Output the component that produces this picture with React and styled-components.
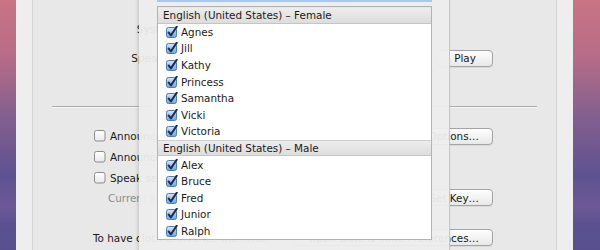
import styled, { createGlobalStyle } from "styled-components";

const GlobalStyle = createGlobalStyle`
  html, body { margin: 0; padding: 0; }
  body {
    font-family: "DejaVu Sans", "Liberation Sans", sans-serif;
    font-size: 10.4px;
    color: #1a1a1a;
    background: #5a5090;
  }
`;

const Desktop = styled.div`
  width: 600px;
  height: 250px;
  overflow: hidden;
  display: flex;
  padding-left: 16px;
  box-sizing: border-box;
  background: linear-gradient(
    to bottom,
    #c87483 0%,
    #b86c88 22%,
    #86608f 45%,
    #5f5290 70%,
    #6d5896 83%,
    #5b5190 90%,
    #574f8e 100%
  );
`;

const Window = styled.div`
  width: 557px;
  flex-shrink: 0;
  display: flex;
  padding: 0 16px;
  box-sizing: border-box;
  background: #eeeeee;
`;

const Pane = styled.div`
  flex: 1;
  position: relative;
  display: flex;
  flex-direction: column;
  padding-top: 19px;
  background: #e8e8e8;
  border-left: 1px solid #d4d4d4;
  border-right: 1px solid #d4d4d4;
`;

const TopRow = styled.div`
  display: grid;
  grid-template-columns: 177px 1fr auto;
  align-items: center;
  height: 20px;
  padding-right: 63px;
  margin-top: ${(p) => p.$gap || 0}px;
`;

const FieldLabel = styled.span`
  text-align: right;
  white-space: nowrap;
`;

const Button = styled.button`
  height: 17px;
  min-width: 56px;
  padding: 0 13px;
  font: inherit;
  color: #1a1a1a;
  white-space: nowrap;
  border: 1px solid #a4a4a4;
  border-radius: 4px;
  background: linear-gradient(to bottom, #ffffff, #f3f3f3 50%, #e8e8e8);
  box-shadow: 0 1px 0 rgba(0, 0, 0, 0.06);
`;

const Separator = styled.div`
  margin: 38px 19px 0;
  height: 1px;
  background: #acacac;
  border-bottom: 1px solid #f7f7f7;
`;

const OptionRow = styled.div`
  display: flex;
  align-items: center;
  justify-content: space-between;
  height: ${(p) => p.$height || 21}px;
  margin-top: ${(p) => p.$gap || 0}px;
  padding: 0 63px 0 ${(p) => p.$indent || 61}px;
  white-space: nowrap;
`;

const CheckLabel = styled.label`
  display: flex;
  align-items: center;
  gap: 4px;
`;

const Hint = styled.span`
  color: #8d8d8d;
`;

const Sheet = styled.div`
  position: absolute;
  top: -12px;
  bottom: -12px;
  left: 106px;
  width: 310px;
  box-sizing: border-box;
  padding: 12px 17px 0 18px;
  display: flex;
  flex-direction: column;
  background: rgba(237, 237, 237, 0.95);
  box-shadow: -1px 0 4px rgba(0, 0, 0, 0.16), 1px 0 0 #cdcdcd;
`;

const FocusBar = styled.div`
  height: 2px;
  background: #a9c9ec;
`;

const VoiceList = styled.div`
  margin-top: 4px;
  background: #ffffff;
  border: 1px solid #b3b3b3;
`;

const GroupHeader = styled.div`
  height: 16.6px;
  box-sizing: border-box;
  display: flex;
  align-items: center;
  padding-left: 5px;
  background: linear-gradient(to bottom, #ededed, #dddddd);
  border-top: 1px solid ${(p) => (p.$first ? "#e6e6e6" : "#cfcfcf")};
  border-bottom: 1px solid #c5c5c5;
  white-space: nowrap;
`;

const VoiceRow = styled.label`
  height: 16.6px;
  display: flex;
  align-items: center;
  gap: 3px;
  padding-left: 8px;
`;

const CheckedBox = () => (
  <svg width="12" height="12" viewBox="0 0 12 12">
    <defs>
      <linearGradient id="cb" x1="0" y1="0" x2="0" y2="1">
        <stop offset="0" stopColor="#dbe9f8" />
        <stop offset="0.5" stopColor="#9cc3ee" />
        <stop offset="1" stopColor="#6da5e2" />
      </linearGradient>
    </defs>
    <rect x="0.5" y="1.5" width="10" height="10" rx="2" fill="url(#cb)" stroke="#4f7cb5" />
    <path d="M2.6 6.4 L4.9 9.4 L10.8 0.6" fill="none" stroke="#1d2c4e" strokeWidth="1.9" strokeLinecap="round" strokeLinejoin="round" />
  </svg>
);

const EmptyBox = () => (
  <svg width="12" height="12" viewBox="0 0 12 12">
    <defs>
      <linearGradient id="eb" x1="0" y1="0" x2="0" y2="1">
        <stop offset="0" stopColor="#ffffff" />
        <stop offset="1" stopColor="#e9e9e9" />
      </linearGradient>
    </defs>
    <rect x="0.5" y="0.5" width="10.5" height="10.5" rx="2" fill="url(#eb)" stroke="#8c8c8c" />
  </svg>
);

const groups = [
  {
    title: "English (United States) – Female",
    voices: ["Agnes", "Jill", "Kathy", "Princess", "Samantha", "Vicki", "Victoria"],
  },
  {
    title: "English (United States) – Male",
    voices: ["Alex", "Bruce", "Fred", "Junior", "Ralph"],
  },
];

export default function App() {
  return (
    <>
      <GlobalStyle />
      <Desktop>
        <Window>
          <Pane>
            <TopRow>
              <FieldLabel>System Voice:</FieldLabel>
            </TopRow>
            <TopRow $gap={9}>
              <FieldLabel>Speaking Rate:</FieldLabel>
              <span />
              <Button>Play</Button>
            </TopRow>
            <Separator />
            <OptionRow $gap={17.5}>
              <CheckLabel>
                <EmptyBox />
                Announce when alerts are displayed
              </CheckLabel>
              <Button>Set Alert Options…</Button>
            </OptionRow>
            <OptionRow>
              <CheckLabel>
                <EmptyBox />
                Announce when an application requires your attention
              </CheckLabel>
            </OptionRow>
            <OptionRow>
              <CheckLabel>
                <EmptyBox />
                Speak selected text when the key is pressed
              </CheckLabel>
            </OptionRow>
            <OptionRow $height={18} $indent={75}>
              <Hint>Current key: Option+Esc</Hint>
              <Button>Set Key…</Button>
            </OptionRow>
            <OptionRow $height={20} $gap={21} $indent={60}>
              <span>To have clock announce the time:</span>
              <Button>Open Date &amp; Time Preferences…</Button>
            </OptionRow>

            <Sheet>
              <FocusBar />
              <VoiceList>
                {groups.map((g, gi) => (
                  <div key={g.title}>
                    <GroupHeader $first={gi === 0}>{g.title}</GroupHeader>
                    {g.voices.map((v) => (
                      <VoiceRow key={v}>
                        <CheckedBox />
                        {v}
                      </VoiceRow>
                    ))}
                  </div>
                ))}
              </VoiceList>
            </Sheet>
          </Pane>
        </Window>
      </Desktop>
    </>
  );
}
